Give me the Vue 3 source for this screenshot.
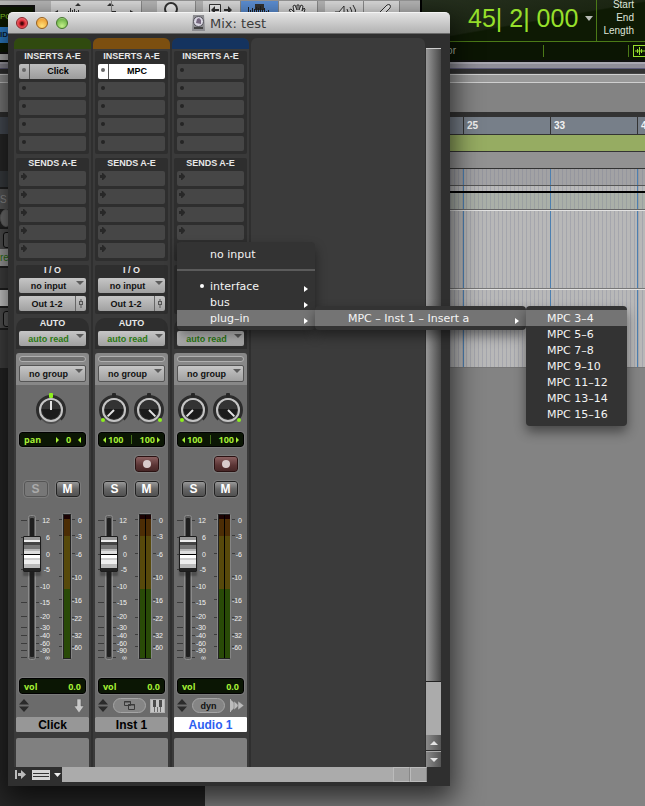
<script setup>
import { ref } from 'vue'

const channels = ref([
  { name: 'Click', kind: 'mono', color: 'green', insert: 'Click', insertOpen: false, fader: 80, selected: false },
  { name: 'Inst 1', kind: 'stereo', color: 'orange', insert: 'MPC', insertOpen: true, fader: 80, selected: false },
  { name: 'Audio 1', kind: 'stereo', color: 'blue', insert: '', insertOpen: false, fader: 80, selected: true },
])

const faderScale = [
  ['12', 10], ['6', 27], ['0', 44], ['-5', 59], ['-10', 76], ['-15', 92],
  ['-20', 106], ['-30', 117], ['-40', 125], ['-60', 133], ['-90', 140], ['∞', 147],
]
const meterScale = [
  ['0', 10], ['-3', 26], ['-6', 44], ['-10', 67], ['-16', 90], ['-22', 108], ['-32', 125], ['-60', 137],
]
const bars = ['1', '9', '17', '25', '33', '41']
const outputs = ['MPC 3–4', 'MPC 5–6', 'MPC 7–8', 'MPC 9–10', 'MPC 11–12', 'MPC 13–14', 'MPC 15–16']

const shift = (c) => (c.kind === 'stereo' ? -2 : 0)
const knobs = (c) => (c.kind === 'stereo' ? [-135, 135] : [0])
</script>

<template>
  <div class="desktop">
    <section class="edit">
      <header class="transport">
        <div class="tools">
          <div class="counter-left"><span>PO</span><b>ID</b></div>
          <button class="tool zoomer" aria-label="Zoom waveform">
            <svg width="60" height="14" viewBox="0 0 60 14"><path d="M24 5l3-3 3 3z M2 12l5-3v6z" fill="#333" /><path d="M17.500 14v-4M19.500 14V7M21.500 14v-5M23.500 14V8M25.500 14v-4M27.500 14V9M29.500 14v-3M31.500 14v-2" stroke="#333" /><path d="M56 5l3-3 3 3z" fill="#333" /></svg>
          </button>
          <button class="tool small" aria-label="Zoom midi">
            <svg width="30" height="14" viewBox="0 0 30 14"><path d="M-4 5l3-3 3 3z M18 9l5 3-5 3z" fill="#333" /><path d="M-8 10.500H4" stroke="#333" /></svg>
          </button>
          <button class="tool apart" aria-label="Zoomer">
            <svg width="38" height="14" viewBox="0 0 38 14"><circle cx="14" cy="8" r="6" fill="#f4f4f4" stroke="#333" stroke-width="2" /></svg>
          </button>
          <button class="tool apart" aria-label="Trim">
            <svg width="37" height="14" viewBox="0 0 37 14"><path d="M6.500 14V3.500h11V14" fill="#f4f4f4" stroke="#333" /><path d="M8 9l4-4v3h4v2h-4v3zM29 9l-4-4v3h-4v2h4v3z" fill="#333" /></svg>
          </button>
          <button class="tool on" aria-label="Selector">
            <svg width="37" height="14" viewBox="0 0 37 14"><path d="M14 3h9v6h-9z" fill="#333" /><path d="M7.500 14V6M9.500 14V9M11.500 14V7M13.500 14V8M15.500 14V6M17.500 14V7M19.500 14V5M21.500 14V8M23.500 14V7M25.500 14v-4M27.500 14V9" stroke="#222" /></svg>
          </button>
          <button class="tool" aria-label="Grabber">
            <svg width="38" height="14" viewBox="0 0 38 14"><path d="M14 14l-4-5 2-1 3 3-1-6 2-1 2 5V4h2v5l2-5 2 1-1 5 2-3 1 1-2 7" fill="#f4f4f4" stroke="#333" /></svg>
          </button>
          <button class="tool apart" aria-label="Scrubber">
            <svg width="38" height="14" viewBox="0 0 38 14"><path d="M10 14v-3h4l5-6v9" fill="#f4f4f4" stroke="#333" /><path d="M22 8q2 3 0 6M25 6q3 4 1 8M28 4q4 5 2 10" fill="none" stroke="#333" /></svg>
          </button>
          <button class="tool" aria-label="Pencil">
            <svg width="35" height="14" viewBox="0 0 35 14"><path d="M13 14L23 4q2-1 3 0t0 3l-7 7" fill="#f4f4f4" stroke="#333" /></svg>
          </button>
        </div>
        <div class="lcd">
          <div class="lcd-main">
            <div class="position">45| 2| 000 <svg width="8" height="5" viewBox="0 0 8 5"><path d="M0 0h8L4 5z" fill="#b9bdb6" /></svg></div>
            <div class="ranges"><span>Start</span><span>End</span><span>Length</span></div>
          </div>
          <div class="lcd-sub">
            <span class="cursor">Cursor</span>
            <span class="slot"></span>
            <svg width="12" height="12" viewBox="0 0 12 12"><rect x=".5" y=".5" width="14" height="11" fill="none" stroke="#97e02b" /><path d="M2 6h10M4.500 4v4M6.500 2v8M8.500 4v4" stroke="#97e02b" /></svg>
          </div>
        </div>
      </header>
      <div class="rails"></div>
      <div class="overview"></div>
      <div class="lists">
        <aside class="track-heads">
          <div class="head-ruler"></div>
          <div class="head-dark"></div>
          <div class="head-mid"></div>
          <div class="head-row">S</div>
          <div class="head-row light"></div>
          <div class="head-row cell"></div>
          <div class="head-read">read</div>
          <div class="head-row low"></div>
          <div class="head-row white"></div>
          <div class="head-row cell"></div>
          <div class="head-row low tall"></div>
        </aside>
        <div class="timeline">
          <div class="ruler"><span v-for="b in bars" :key="b">{{ b }}</span></div>
          <div class="lane green"></div>
          <div class="lane plain"></div>
          <div class="lane striped head"></div>
          <div class="lane striped thin"></div>
          <div class="lane striped sage"></div>
          <div class="lane striped big"></div>
          <div class="lane striped big"></div>
        </div>
      </div>
    </section>

    <section class="window">
      <header class="titlebar">
        <div class="lights">
          <button class="light red" aria-label="Close"></button>
          <button class="light amber" aria-label="Minimize"></button>
          <button class="light lime" aria-label="Zoom"></button>
        </div>
        <h1>
          <svg width="13" height="16" viewBox="0 0 13 16"><path d="M1 0h11l1 16H0z" fill="#8c8c90" /><circle cx="6.500" cy="6.500" r="5" fill="#d9d6e2" stroke="#55555c" /><path d="M4 8l1-4 2-1 2 2v4z" fill="#75677f" /><path d="M2 13h9" stroke="#444" stroke-width="2" /></svg>
          Mix: test
        </h1>
      </header>

      <div class="mixer">
        <article v-for="c in channels" :key="c.name" class="strip">
          <div class="tab" :class="c.color"></div>

          <section class="block">
            <h2>INSERTS A-E</h2>
            <button v-for="n in 5" :key="n" class="slot-btn" :class="{ filled: n === 1 && c.insert, open: n === 1 && c.insertOpen }" :aria-label="'Insert ' + n">
              <i class="dot"></i><span>{{ n === 1 ? c.insert : '' }}</span>
            </button>
          </section>

          <section class="block">
            <h2>SENDS A-E</h2>
            <button v-for="n in 5" :key="n" class="slot-btn send" :aria-label="'Send ' + n">
              <svg width="6" height="7" viewBox="0 0 6 7"><path d="M0 2h2V0h1l3 3v1L3 7H2V5H0z" fill="#282828" /></svg>
            </button>
          </section>

          <section class="block">
            <h2>I / O</h2>
            <div class="pick"><select aria-label="Input"><option>no input</option></select></div>
            <div class="out">
              <button>Out 1-2</button>
              <button class="mini" aria-label="Output window"><svg width="6" height="9" viewBox="0 0 6 9"><path d="M3 0v9M1 3h4" stroke="#555" /><rect x="1.500" y="2.500" width="3" height="3" fill="#aaa" stroke="#555" /></svg></button>
            </div>
          </section>

          <section class="block auto">
            <h2>AUTO</h2>
            <div class="pick read"><select aria-label="Automation mode"><option>auto read</option></select></div>
          </section>

          <section class="group">
            <div class="groove"></div>
            <div class="pick tall"><select aria-label="Group"><option>no group</option></select></div>
          </section>

          <div class="controls">
            <div class="knobs" :class="c.kind">
              <label v-for="a in knobs(c)" :key="a" class="knob">
                <svg width="34" height="36" viewBox="0 0 34 36">
                  <path d="M7.500 28.500A13.500 13.500 0 1 1 26.500 28.500" fill="none" stroke="#2c2c2c" stroke-width="3" />
                  <rect v-if="a !== 0" x="15" y="2" width="4" height="4" rx="1" fill="#262626" />
                  <circle cx="17" cy="21" r="12" fill="#3a3a3a" opacity=".6" />
                  <circle cx="17" cy="19" r="11" fill="#303030" stroke="#c4c4c4" stroke-width="2" />
                  <circle cx="17" cy="19" r="9" fill="#1b1b1b" />
                  <path d="M8 18a9 9 0 0 1 18 0z" fill="#333" />
                  <path d="M17 19V10" stroke="#e2e2e2" stroke-width="2" :transform="`rotate(${a} 17 19)`" />
                  <rect v-if="a === 0" x="15" y="2" width="4" height="5" rx="1" fill="#8df01c" />
                  <circle v-else :cx="a < 0 ? 6 : 28" cy="29" r="2" fill="#8df01c" />
                </svg>
                <input type="range" min="-135" max="135" :value="a" aria-label="Pan">
              </label>
            </div>

            <div v-if="c.kind === 'mono'" class="display">
              <span>pan</span>
              <svg width="3" height="6" viewBox="0 0 3 6"><path d="M0 0l3 3-3 3z" fill="#a4ee35" /></svg>
              <span>0</span>
              <svg width="3" height="6" viewBox="0 0 3 6"><path d="M3 0L0 3l3 3z" fill="#a4ee35" /></svg>
            </div>
            <div v-else class="display wide">
              <span><svg width="3" height="6" viewBox="0 0 3 6"><path d="M3 0L0 3l3 3z" fill="#a4ee35" /></svg> 100</span>
              <i></i>
              <span>100 <svg width="3" height="6" viewBox="0 0 3 6"><path d="M0 0l3 3-3 3z" fill="#a4ee35" /></svg></span>
            </div>

            <div class="pair rec-row">
              <button v-if="c.kind === 'stereo'" class="key rec" aria-label="Record enable"><i></i></button>
            </div>
            <div class="pair">
              <button class="key" :class="{ dim: c.kind === 'mono' }">S</button>
              <button class="key">M</button>
            </div>

            <div class="fader" :class="c.kind">
              <svg width="73" height="155" viewBox="0 0 73 155">
                <g :transform="`translate(${shift(c)} 0)`">
                  <path v-for="t in faderScale" :key="t[0]" :d="`M5 ${t[1] + 0.5}h6M20 ${t[1] + 0.5}h3`" stroke="#3c3c3c" />
                  <rect x="12.500" y="5.500" width="7" height="144" rx="2" fill="#5a5a5a" stroke="#8b8b8b" />
                  <rect x="14" y="8" width="4" height="139" rx="1" fill="#1f1f1f" />
                  <text v-for="t in faderScale" :key="t[0]" x="34" :y="t[1] + 3" text-anchor="end">{{ t[0] }}</text>
                </g>
                <g :transform="`translate(${-shift(c)} 0)`">
                  <path v-for="t in meterScale" :key="t[0]" :d="`M56 ${t[1] - 0.5}h3`" stroke="#3c3c3c" />
                  <text v-for="t in meterScale" :key="t[0]" x="66" :y="t[1] + 3" text-anchor="end">{{ t[0] }}</text>
                </g>
                <g v-if="c.kind === 'mono'">
                  <path v-for="t in meterScale" :key="t[0]" :d="`M43 ${t[1] - 0.5}h3`" stroke="#3c3c3c" />
                  <rect x="46.500" y="3.500" width="9" height="146" rx="1" fill="#222" stroke="#858585" />
                  <path d="M48 5h6v4h-6z" fill="#1c0303" /><path d="M48 9h6v17h-6z" fill="#4c2d05" /><path d="M48 26h6v53h-6z" fill="#57490b" /><path d="M48 79h6v69h-6z" fill="#294a07" />
                </g>
                <g v-else>
                  <path v-for="t in meterScale" :key="t[0]" :d="`M40 ${t[1] - 0.5}h3`" stroke="#3c3c3c" />
                  <rect x="43.500" y="3.500" width="13" height="146" rx="1" fill="#222" stroke="#858585" />
                  <path d="M45 5h11v4H45z" fill="#1c0303" /><path d="M45 9h11v17H45z" fill="#4c2d05" /><path d="M45 26h11v53H45z" fill="#57490b" /><path d="M45 79h11v69H45z" fill="#294a07" /><path d="M50.500 5v143" stroke="#000" />
                </g>
              </svg>
              <input v-model="c.fader" type="range" min="0" max="100" :aria-label="c.name + ' volume'">
            </div>

            <div class="display vol"><span>vol</span><span>0.0</span></div>

            <div class="icons">
              <svg width="10" height="13" viewBox="0 0 10 13"><path d="M0 5.500L5 0l5 5.500zM0 7.500L5 13l5-5.500z" fill="#2b2b2b" /></svg>
              <button v-if="c.name === 'Inst 1'" class="pill" aria-label="Instrument window"><svg width="11" height="9" viewBox="0 0 11 9"><path d="M.5.5h6v4h-6zM4.500 3.500h6v5h-6z" fill="#888" stroke="#3a3a3a" /><path d="M4 4h7M0 1h7" stroke="#3a3a3a" /></svg></button>
              <button v-if="c.name === 'Audio 1'" class="pill">dyn</button>
              <svg v-if="c.name === 'Click'" width="14" height="14" viewBox="0 0 14 14"><path d="M5 0h4v7h3l-5 7-5-7h3z" fill="#c8c8c8" stroke="#555" stroke-width=".5" /></svg>
              <svg v-if="c.name === 'Inst 1'" width="15" height="14" viewBox="0 0 15 14"><rect x=".5" y=".5" width="14" height="13" fill="#c6c6c6" stroke="#b0b0b0" /><path d="M4.500 1v12M10.500 1v12M7.500 8v5" stroke="#6a6a6a" /><path d="M3 1h3v7H3zM9 1h3v7H9z" fill="#4c4c4c" /></svg>
              <svg v-if="c.name === 'Audio 1'" width="14" height="13" viewBox="0 0 14 13"><path d="M0 0h1v1l6 5.500L1 12v1H0z" fill="#bcbcbc" /><path d="M4 2l5 4.500L4 11z" fill="#bcbcbc" stroke="#6b6b6b" stroke-width=".5" /><path d="M8 2l6 4.500L8 11z" fill="#bcbcbc" stroke="#6b6b6b" stroke-width=".5" /></svg>
            </div>
          </div>
          <button class="name" :class="{ selected: c.selected }">{{ c.name }}</button>
          <div class="comments"></div>
        </article>

        <div class="canvas"></div>
        <div class="vscroll">
          <div class="thumb"></div>
          <div class="track"></div>
          <button aria-label="Scroll up"><svg width="8" height="4" viewBox="0 0 8 4"><path d="M0 4l4-4 4 4z" fill="#e4e4e4" /></svg></button>
          <button aria-label="Scroll down"><svg width="8" height="4" viewBox="0 0 8 4"><path d="M0 0l4 4 4-4z" fill="#e4e4e4" /></svg></button>
        </div>
      </div>

      <footer class="status">
        <div class="views">
          <svg width="11" height="9" viewBox="0 0 11 9"><path d="M1 0v9" stroke="#bbb" stroke-width="2" /><path d="M3 3h3V0l5 4.500L6 9V6H3z" fill="#bbb" /></svg>
          <svg width="18" height="10" viewBox="0 0 18 10"><path d="M0 0h18v10H0z" fill="#d5d5d5" /><path d="M1 3.500h16M1 6.500h16" stroke="#333" /></svg>
          <svg width="7" height="4" viewBox="0 0 7 4"><path d="M0 0h7L3.500 4z" fill="#eee" /></svg>
        </div>
        <div class="hscroll"></div>
        <button class="hbtn" aria-label="Scroll left"></button>
        <button class="hbtn" aria-label="Scroll right"></button>
      </footer>
    </section>

    <ul class="menu root">
      <li>no input</li>
      <li class="rule"></li>
      <li class="checked more">interface</li>
      <li class="more">bus</li>
      <li class="more active">plug–in
        <ul class="menu second">
          <li class="more active">MPC – Inst 1 – Insert a
            <ul class="menu third">
              <li v-for="(o, i) in outputs" :key="o" :class="{ active: i === 0 }">{{ o }}</li>
            </ul>
          </li>
        </ul>
      </li>
    </ul>
  </div>
</template>

<style>
body { background: #838383; }
</style>

<style scoped>
* { box-sizing: border-box; }
button, select, input { font: inherit; color: inherit; margin: 0; padding: 0; border: 0; background: none; appearance: none; }
svg { display: block; flex: none; }
h1, h2, ul { margin: 0; padding: 0; }
.desktop { position: relative; min-height: 100vh; overflow: hidden; display: flex; flex-direction: column; font-family: "Liberation Sans", Arial, sans-serif; background: #838383; }

.edit { flex: 1; display: flex; flex-direction: column; }
.transport { display: flex; height: 60px; background: #000; }
.tools { display: flex; width: 420px; flex: none; background: #b9b9b9; border-top: 1px solid #999; }
.tool { display: flex; align-items: flex-start; overflow: hidden; background: #dedede; border-right: 1px solid #8d8d8d; }
.tool.zoomer { width: 61px; }
.tool.small { width: 30px; margin-right: 8px; }
.tool.apart { margin-left: 7px; }
.tool.on { background: #5e92d8; }
.counter-left { width: 35px; margin: 4px 16px 6px 0; border: 2px solid #111; border-left: 0; background: #0d1a02; color: #7ec225; font-size: 8px; line-height: 20px; display: flex; flex-direction: column; }
.counter-left b { background: #2f83cf; color: #0a2038; line-height: 16px; }
.lcd { flex: 1; display: flex; flex-direction: column; margin-left: 2px; background: #0b1503; overflow: hidden; }
.lcd-main { display: flex; height: 42px; border-bottom: 1px solid #4b7a17; background: linear-gradient(170deg, #26301f, #1b2512 50%, #0e1a04 52%); }
.position { display: flex; align-items: center; gap: 7px; width: 175px; padding-left: 46px; padding-bottom: 5px; border-right: 1px solid #4b7a17; font-size: 25px; white-space: nowrap; color: #97e02b; }
.ranges { width: 37px; display: flex; flex-direction: column; align-items: flex-end; font-size: 10px; line-height: 13px; color: #dfe5da; margin-top: -2px; }
.lcd-sub { display: flex; align-items: center; height: 17px; font-size: 10px; color: #b9c0b2; }
.cursor { padding-left: 4px; width: 126px; }
.slot { width: 86px; height: 12px; border: 1px solid #4b7a17; border-width: 0 1px; margin-right: 4px; flex: none; }

.rails { height: 13px; background: linear-gradient(#111 0 2px, #a9a7b1 2px 4px, #8f8d98 4px 8px, #5d5b78 8px 9px, #333 9px); }
.overview { height: 44px; background: linear-gradient(#444 0 1px, #cfcfcf 1px 2px, #999 2px 9px, #cfcfcf 9px 10px, #838383 10px 39px, #333 39px); }
.lists { flex: 1; display: grid; grid-template-columns: 205px 1fr; }
.track-heads { background: #272727; font-size: 10px; color: #999; }
.head-ruler { height: 17px; background: #4b515a; }
.head-dark { height: 37px; background: #2a2a2a; }
.head-mid { height: 16px; background: #3c4044; }
.head-row { height: 22px; line-height: 22px; background: #5e5e5e; border-top: 2px solid #222; }
.head-row.light { height: 18px; background: #777; }
.head-row.cell { height: 22px; background: #555; padding-left: 3px; }
.head-row.cell::after { content: ""; display: block; width: 22px; height: 14px; margin-top: 3px; border: 1px solid #111; border-radius: 3px; background: #666; }
.head-read { height: 17px; line-height: 17px; background: #aaa; color: #2c7a12; }
.head-row.low { background: #454545; }
.head-row.white { height: 18px; background: #ddd; }
.head-row.tall { height: 40px; }
.ruler { display: flex; height: 18px; overflow: hidden; background: #777f89; border-bottom: 1px solid #333; font-size: 10px; font-weight: bold; line-height: 17px; color: #f2f2f2; }
.ruler span { width: 87px; flex: none; padding-left: 3px; border-left: 1px solid #333; }
.ruler span:first-child { width: 84px; }
.lane { border-bottom: 1px solid #333; }
.lane.green { height: 17px; background: #96ac62; }
.lane.plain { height: 17px; background: #929292; }
.striped { background-image: linear-gradient(90deg, #4c7fb0 0 1px, transparent 1px), linear-gradient(90deg, rgba(115, 120, 145, .28) 0 1px, transparent 1px); background-size: 87px 100%, 4px 100%; background-position: -3px 0, 1px 0; background-color: #b8b8b8; }
.striped.head { height: 17px; background-color: #a2a2a4; border-bottom-color: #555; }
.striped.thin { height: 7px; border-bottom: 2px solid #000; }
.striped.sage { height: 17px; background-color: #aab0a8; border-bottom: 1px solid #666; }
.striped.big { height: 79px; border-top: 1px solid #e2e2e2; border-bottom: 1px solid #777; }

.window { position: absolute; left: 8px; top: 12px; width: 442px; display: flex; flex-direction: column; background: #2f2f2f; border-radius: 5px 5px 0 0; box-shadow: 0 10px 28px 4px rgba(0, 0, 0, .65); }
.titlebar { display: flex; align-items: center; height: 22px; padding-left: 8px; border-radius: 5px 5px 0 0; border-top: 1px solid #f4f4f4; border-bottom: 1px solid #6b6b6b; background: linear-gradient(#e2e2e2, #b2b2b2); }
.lights { display: flex; gap: 8px; width: 176px; }
.light { width: 12px; height: 12px; border-radius: 50%; border: 1px solid #666; }
.red { background: radial-gradient(circle at 50% 55%, #4a0508 0 1px, #e02f3a 3px, #f7a0a0); border-color: #8a2328; }
.amber { background: radial-gradient(circle at 50% 80%, #ffe27a, #f0a53a 70%, #fff0d0); border-color: #96601c; }
.lime { background: radial-gradient(circle at 50% 80%, #c4f08a, #74b84c 70%, #eaffda); border-color: #44752a; }
.titlebar h1 { display: flex; align-items: center; gap: 5px; font: 13px "DejaVu Sans", sans-serif; color: #3c3c3c; white-space: nowrap; }

.mixer { display: flex; gap: 2px; padding: 4px 9px 0 6px; }
.strip { width: 77px; display: flex; flex-direction: column; background: #3a3a3a; border-radius: 6px 6px 0 0; }
.tab { height: 11px; margin-bottom: 2px; border-radius: 6px 6px 0 0; }
.tab.green { background: #304a0f; }
.tab.orange { background: #7c4f10; }
.tab.blue { background: #14335f; }
.block { display: flex; flex-direction: column; gap: 3px; margin: 0 2px 4px; padding: 0 3px 3px; background: #2e2e2e; border-radius: 2px; font-size: 9px; font-weight: bold; }
.block.auto { border-radius: 10px 10px 0 0; }
.block h2 { height: 10px; font-size: 9px; line-height: 11px; text-align: center; color: #e8e8e8; white-space: nowrap; }
.slot-btn { display: flex; align-items: center; height: 15px; border-radius: 2px; background: #464646; color: #000; }
.dot { width: 4px; height: 4px; margin: 0 6px 4px 3px; border-radius: 50%; background: #252525; flex: none; }
.slot-btn span { flex: 1; align-self: stretch; line-height: 15px; text-align: center; }
.slot-btn.filled { background: linear-gradient(#bdbdbd, #9c9c9c); }
.slot-btn.filled .dot { background: #666; margin-right: 3px; }
.slot-btn.filled span { border-left: 1px solid #555; }
.slot-btn.open { background: #fff; }
.send svg { margin: 0 0 4px 2px; }
.pick { position: relative; display: flex; height: 15px; border-radius: 2px; background: linear-gradient(#c6c6c6, #a0a0a0); color: #111; font-size: 9px; font-weight: bold; }
.pick::after { content: ""; position: absolute; right: 2px; top: 3px; border: 4px solid transparent; border-top: 4px solid #5c5c5c; border-bottom: 0; pointer-events: none; }
.pick select { flex: 1; width: 100%; padding: 0 10px 0 2px; text-align: center; text-align-last: center; }
.pick.read { color: #2a7a12; }
.pick.tall { height: 17px; border: 1px solid #555; }
.out { display: flex; height: 15px; border-radius: 2px; background: linear-gradient(#c6c6c6, #a0a0a0); color: #111; }
.out button { flex: 1; }
.out .mini { flex: none; display: grid; place-items: center; width: 11px; border-left: 1px solid #666; }
.group { display: flex; flex-direction: column; gap: 3px; margin: 0 2px; padding: 3px; border-radius: 3px 3px 0 0; background: #888; }
.groove { height: 6px; border: 1px solid #b0b0b0; border-radius: 3px; background: #707070; }

.controls { display: flex; flex-direction: column; margin: 0 2px; padding: 6px 3px 3px; background: #6b6b6b; }
.knobs { display: flex; justify-content: center; gap: 1px; height: 36px; margin-bottom: 5px; }
.knobs.mono { padding-right: 3px; }
.knob { display: grid; flex: none; }
.knob svg, .knob input { grid-area: 1 / 1; }
.knob input { width: 34px; opacity: 0; }
.display { display: flex; align-items: center; justify-content: space-between; height: 15px; padding: 0 4px; border: 1px solid #000; border-radius: 3px; outline: 1px solid #7a7a7a; background: #0b1604; color: #a4ee35; font: bold 9px "Open Sans", sans-serif; }
.display span { display: flex; align-items: center; gap: 2px; line-height: 13px; }
.display span:first-child { margin-right: 8px; }
.display.wide span:first-child { margin-right: 0; }
.display i { width: 1px; height: 9px; background: #45701a; }
.display.vol { height: 16px; }
.pair { display: flex; justify-content: center; gap: 8px; height: 16px; margin-bottom: 13px; padding-right: 2px; }
.rec-row { justify-content: flex-end; padding-right: 6px; margin: 9px 0; }
.key { width: 24px; height: 16px; border: 1px solid #222; border-radius: 3px; outline: 1px solid #7c7c7c; background: linear-gradient(#999, #666 50%, #505050); color: #fff; font-size: 12px; font-weight: bold; line-height: 14px; }
.key.dim { background: #777; border-color: #555; color: #aaa; }
.key.rec { display: grid; place-items: center; background: linear-gradient(#8a6060, #5a3434 60%, #472626); border-color: #2a1212; }
.key.rec i { width: 8px; height: 8px; border-radius: 50%; background: #d8cccc; }
.fader { display: grid; justify-items: start; margin: 0 -3px 13px; }
.fader svg, .fader input { grid-area: 1 / 1; }
.fader text { font-size: 7px; fill: #f0f0f0; }
.fader input { writing-mode: vertical-lr; direction: rtl; width: 18px; height: 145px; margin: 4px 0 0 7px; }
.fader.stereo input { margin-left: 5px; }
.fader input::-webkit-slider-thumb { appearance: none; width: 18px; height: 36px; border: 1px solid #1c1c1c; border-radius: 1px; background: linear-gradient(#999 0 3px, #eee 3px 5px, #444 5px 8px, #777 8px 12px, #b5b5b5 12px 14px, #ddd 14px 17px, #000 17px 18px, #fff 18px 21px, #ccc 21px 23px, #eee 23px 27px, #bbb 27px 31px, #222 31px); box-shadow: 0 4px 2px rgba(30, 30, 30, .35); }
.icons { display: flex; align-items: center; justify-content: space-between; height: 17px; margin-top: 3px; }
.pill { display: grid; place-items: center; width: 33px; height: 15px; border: 1px solid #a5a5a5; border-radius: 8px; background: #858585; color: #111; font-size: 9px; font-weight: bold; line-height: 12px; }
.name { height: 15px; margin: 0 2px 6px; border-radius: 1px; background: #979797; color: #000; font-size: 12px; font-weight: bold; line-height: 17px; }
.name.selected { background: #fff; color: #2d5ff0; }
.comments { height: 29px; margin: 0 2px; border-radius: 2px 2px 0 0; background: #808080; }

.canvas { flex: 1; border-radius: 6px 6px 0 0; background: #3b3b3b; }
.vscroll { display: flex; flex-direction: column; width: 15px; margin: 10px 0 0 -1px; }
.thumb { flex: 1; border-top: 1px solid #ccc; border-bottom: 1px solid #222; background: linear-gradient(90deg, #999, #484848); }
.track { height: 52px; background: #ababab; }
.vscroll button { display: grid; place-items: center; height: 16px; margin-bottom: 1px; border-top: 1px solid #aaa; background: linear-gradient(90deg, #8a8a8a, #555); }
.vscroll button:last-child { margin-bottom: 0; }
.status { display: flex; height: 15px; margin: 0 23px 4px 6px; }
.views { display: flex; align-items: center; gap: 4px; width: 48px; padding-left: 1px; }
.views svg:nth-child(2) { margin-left: 2px; }
.hscroll { flex: 1; background: #ababab; }
.hbtn { width: 17px; border: 1px solid #bbb; border-right-color: #888; background: #a2a2a2; }

.menu { position: absolute; list-style: none; padding: 4px 0; background: #333; border-radius: 4px; box-shadow: 0 6px 12px rgba(0, 0, 0, .45); font: 11px "DejaVu Sans", sans-serif; color: #f4f4f4; white-space: nowrap; }
.menu li { position: relative; height: 16px; line-height: 18px; padding-left: 33px; }
.menu li.active { background: #747474; }
.menu li.more::after { content: ""; position: absolute; right: 7px; top: 8px; border: 3px solid transparent; border-left: 4px solid #fff; border-right: 0; }
.menu li.checked::before { content: ""; position: absolute; left: 23px; top: 6px; width: 4px; height: 4px; border-radius: 50%; background: #fff; }
.menu li.rule::before { content: ""; position: absolute; inset: 7px 0; background: #5b5b5b; }
.root { left: 177px; top: 242px; width: 138px; }
.second { left: 100%; top: -4px; width: 211px; }
.third { left: 100%; top: -4px; width: 101px; }
.third li { padding-left: 21px; }
</style>
